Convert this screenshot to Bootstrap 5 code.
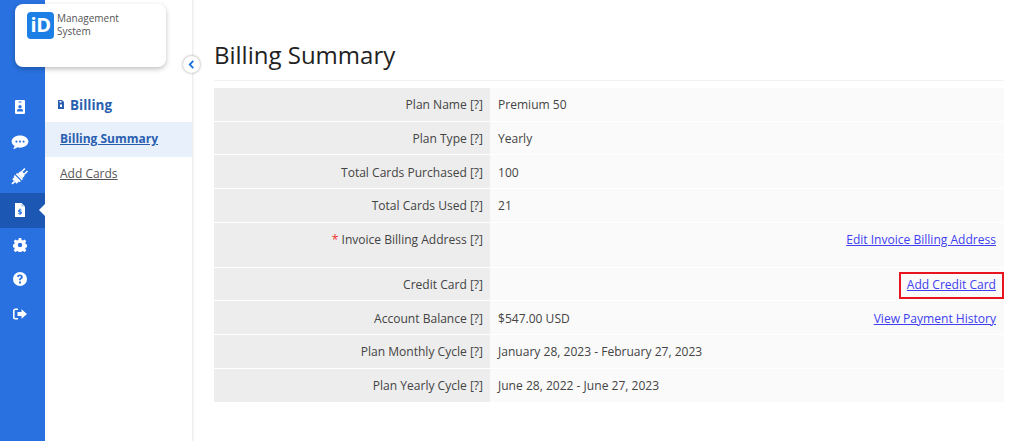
<!DOCTYPE html>
<html lang="en"><head><meta charset="utf-8"><title>Billing Summary</title>
<link href="https://cdn.jsdelivr.net/npm/bootstrap@5.3.0/dist/css/bootstrap.min.css" rel="stylesheet">
<style>
html,body{height:100%;overflow:hidden}
body{font-family:"Open Sans",sans-serif;font-size:12px;color:#444;background:#fff}
.shell{height:441px}
.rail{width:45px;background:#2971e0;padding-top:90px}
.rail-item{height:34.4px;color:#fff;position:relative;padding-right:5px}
.rail-item.on{background:#1c58b3}
.rail-item.on::after{content:"";position:absolute;right:0;top:11px;border:6px solid transparent;border-right-color:#fff;border-left-width:0}
.rail-item svg{width:14px;height:14px;fill:#fff}
.rail-item svg.wide{width:18px;height:18px}
.subnav{width:148px;border-right:1px solid #eee;box-shadow:1px 0 2px rgba(0,0,0,.04);position:relative}
.brand-card{position:absolute;left:-30px;top:4px;width:151px;height:63px;background:#fff;border-radius:8px;box-shadow:0 2px 5px rgba(0,0,0,.25);padding:8px 12px;z-index:2;gap:3px}
.brand-mark{width:27px;height:27px;border-radius:4px;background:#1b7fe6;color:#fff;font:700 20px/26px "Open Sans",sans-serif;text-align:center;letter-spacing:-.5px}
.brand-text{font-size:10px;line-height:12.5px;color:#555}
.toggle{position:absolute;right:-8px;top:56px;width:17px;height:17px;border-radius:50%;background:#fff;box-shadow:0 0 3px rgba(0,0,0,.4);z-index:3}
.toggle svg{width:9px;height:9px}
.subhead{padding-top:96px;padding-left:12px;height:122px;font-size:13.5px;font-weight:700;color:#2a5fb0;line-height:18px;gap:5px}
.subhead svg{width:8px;height:9px;fill:#2a5fb0}
.sublink{display:block;height:35px;line-height:33px;padding-left:15px;font-size:12px;color:#555}
.sublink.on{background:#e8f0fb;color:#2a5fb0;font-weight:700}
.main-area{padding:42px 20px 0 21px}
.page-title{font-size:24px;line-height:26px;font-weight:400;color:#222;height:39px;margin:0;border-bottom:1px solid #f2f2f2;margin-bottom:7px}
.bill-row{height:33.7px;border-bottom:1px solid #fff;font-size:12.05px}
.bill-row.tall{height:45px}
.lab{width:276px;background:#ededed;text-align:right;padding:8.3px 7px 0 0;color:#444}
.val{background:#fafafa;padding:8.3px 8px 0 8px;color:#444}
.req{color:#e33}
.bill-link{color:#4040f0}
.boxed{border:2px solid #e8141f;padding:0 6px;margin:-4.500px -8px 0 0;height:27px;line-height:22px}
</style></head><body>
<div class="shell d-flex">
<nav class="rail flex-shrink-0">
<div class="rail-item d-flex align-items-center justify-content-center"><svg viewBox="0 0 14 14"><path fill-rule="evenodd" d="M3 0h8a1 1 0 0 1 1 1v12a1 1 0 0 1-1 1H3a1 1 0 0 1-1-1V1a1 1 0 0 1 1-1zM5.500 1.500v1h3v-1zM7 5a1.700 1.700 0 1 0 0 3.400A1.700 1.700 0 0 0 7 5zM4 11.500h6V10.400c0-.8-1-1.300-3-1.300s-3 .5-3 1.300z"/></svg></div>
<div class="rail-item d-flex align-items-center justify-content-center"><svg viewBox="0 0 14 14" class="wide"><path fill-rule="evenodd" d="M7 2c3.700 0 6.500 2.100 6.500 4.700S10.700 11.400 7 11.400c-.8 0-1.400-.1-2.100-.3-.8.7-2 1.300-3.400 1.300.7-.8 1.200-1.500 1.300-2.300C1.300 9.200.500 8 .500 6.700.500 4.100 3.300 2 7 2zM4.200 5.900a.8.800 0 1 0 0 1.600.8.800 0 0 0 0-1.600zm2.800 0a.8.800 0 1 0 0 1.600.8.800 0 0 0 0-1.600zm2.800 0a.8.800 0 1 0 0 1.600.8.800 0 0 0 0-1.600z"/></svg></div>
<div class="rail-item d-flex align-items-center justify-content-center"><svg viewBox="0 0 16 16" class="wide"><g transform="rotate(-45 8 8)"><rect x="-2" y="7.200" width="3" height="1.600"/><path d="M1 5.200h2.500c.9 0 1.700.7 1.700 1.500v2.600c0 .8-.8 1.500-1.700 1.500H1z" transform="translate(0 0)"/><rect x="3.800" y="4.200" width="1.500" height="7.600"/><rect x="6.500" y="4.200" width="1.500" height="7.600"/><path d="M8 5.200h2.300c1 0 1.800.8 1.800 1.800v2c0 1-.8 1.800-1.800 1.800H8z"/><rect x="11.800" y="5.700" width="4" height="1.400"/><rect x="11.800" y="8.900" width="4" height="1.400"/></g></svg></div>
<div class="rail-item on d-flex align-items-center justify-content-center"><svg viewBox="0 0 14 14"><path d="M2 0h6.500L12 3.500V14H2z"/><path d="M7.500 5.500h-1v1c-1 .2-1.500.7-1.500 1.400 0 .9.800 1.200 1.500 1.400v1.200c-.4-.1-.8-.2-1.200-.5l-.3.800c.4.200.9.400 1.500.4v.8h1v-.8c1-.2 1.500-.8 1.500-1.500 0-.9-.7-1.200-1.500-1.400V7.200c.3 0 .6.100.9.300l.3-.8c-.3-.2-.7-.3-1.200-.3z" style="fill:#2f7be6"/><path d="M8.400.8v2.800h2.800z" style="fill:#9fc3f2"/></svg></div>
<div class="rail-item d-flex align-items-center justify-content-center"><svg viewBox="0 0 14 14"><path fill-rule="evenodd" d="M5.800 0h2.400l.4 2 1.300.6 1.700-1.100 1.700 1.700-1.100 1.700.6 1.300 2 .4v2.400l-2 .4-.6 1.300 1.100 1.700-1.700 1.700-1.700-1.100-1.300.6-.4 2H5.800l-.4-2-1.300-.6-1.700 1.100L.7 12.400l1.100-1.700-.6-1.300-2-.4V6.600l2-.4.6-1.300L.7 3.200 2.400 1.500l1.700 1.100 1.300-.6zM7 4.800a2.200 2.200 0 1 0 0 4.400 2.200 2.200 0 0 0 0-4.400z"/></svg></div>
<div class="rail-item d-flex align-items-center justify-content-center"><svg viewBox="0 0 14 14"><path fill-rule="evenodd" d="M7 0a7 7 0 1 1 0 14A7 7 0 0 1 7 0zM7 2.500C5.300 2.500 4.300 3.400 4 4.700l1.700.5c.2-.7.600-1.100 1.200-1.100.6 0 1 .3 1 .8 0 .4-.3.700-.8 1-.8.500-1.100 1-1.100 1.900v.5h1.800v-.3c0-.4.100-.6.700-1 .8-.5 1.300-1.100 1.300-2.100 0-1.500-1.200-2.400-2.800-2.400zM6 9.600v1.900h1.900V9.600z"/></svg></div>
<div class="rail-item d-flex align-items-center justify-content-center"><svg viewBox="0 0 14 14"><path d="M8.500 2.200L14 7l-5.500 4.800V9H4.500V5h4zM5 1.500v1.600H2.300c-.4 0-.7.300-.7.700v6.400c0 .4.300.7.700.7H5v1.600H2.300C1 12.500 0 11.500 0 10.200V3.800C0 2.500 1 1.500 2.300 1.500z"/></svg></div>
</nav>
<aside class="subnav flex-shrink-0">
<div class="brand-card d-flex"><div class="brand-mark flex-shrink-0">iD</div><div class="brand-text">Management<br>System</div></div>
<div class="toggle d-flex align-items-center justify-content-center"><svg viewBox="0 0 10 10"><path d="M7 1L3 5l4 4" fill="none" stroke="#1b6fe0" stroke-width="2"/></svg></div>
<div class="subhead d-flex align-items-start"><svg viewBox="0 0 8 9" class="mt-1"><path fill-rule="evenodd" d="M1 0h4l2 2v7H1zM3 4.500v2.500h2V4.500zM2.500 1v1.500h2V1z"/></svg><span>Billing</span></div>
<a href="#" class="sublink on">Billing Summary</a>
<a href="#" class="sublink">Add Cards</a>
</aside>
<main class="main-area flex-grow-1">
<h1 class="page-title">Billing Summary</h1>
<div class="bill-row d-flex"><div class="lab flex-shrink-0">Plan Name [?]</div><div class="val flex-grow-1">Premium 50</div></div>
<div class="bill-row d-flex"><div class="lab flex-shrink-0">Plan Type [?]</div><div class="val flex-grow-1">Yearly</div></div>
<div class="bill-row d-flex"><div class="lab flex-shrink-0">Total Cards Purchased [?]</div><div class="val flex-grow-1">100</div></div>
<div class="bill-row d-flex"><div class="lab flex-shrink-0">Total Cards Used [?]</div><div class="val flex-grow-1">21</div></div>
<div class="bill-row tall d-flex"><div class="lab flex-shrink-0"><span class="req">*</span> Invoice Billing Address [?]</div><div class="val flex-grow-1 text-end"><a href="#" class="bill-link">Edit Invoice Billing Address</a></div></div>
<div class="bill-row d-flex"><div class="lab flex-shrink-0">Credit Card [?]</div><div class="val flex-grow-1 text-end"><a href="#" class="bill-link boxed d-inline-block">Add Credit Card</a></div></div>
<div class="bill-row d-flex"><div class="lab flex-shrink-0">Account Balance [?]</div><div class="val flex-grow-1 d-flex justify-content-between"><span>$547.00 USD</span><a href="#" class="bill-link">View Payment History</a></div></div>
<div class="bill-row d-flex"><div class="lab flex-shrink-0">Plan Monthly Cycle [?]</div><div class="val flex-grow-1">January 28, 2023 - February 27, 2023</div></div>
<div class="bill-row d-flex"><div class="lab flex-shrink-0">Plan Yearly Cycle [?]</div><div class="val flex-grow-1">June 28, 2022 - June 27, 2023</div></div>
</main>
</div>
</body></html>
